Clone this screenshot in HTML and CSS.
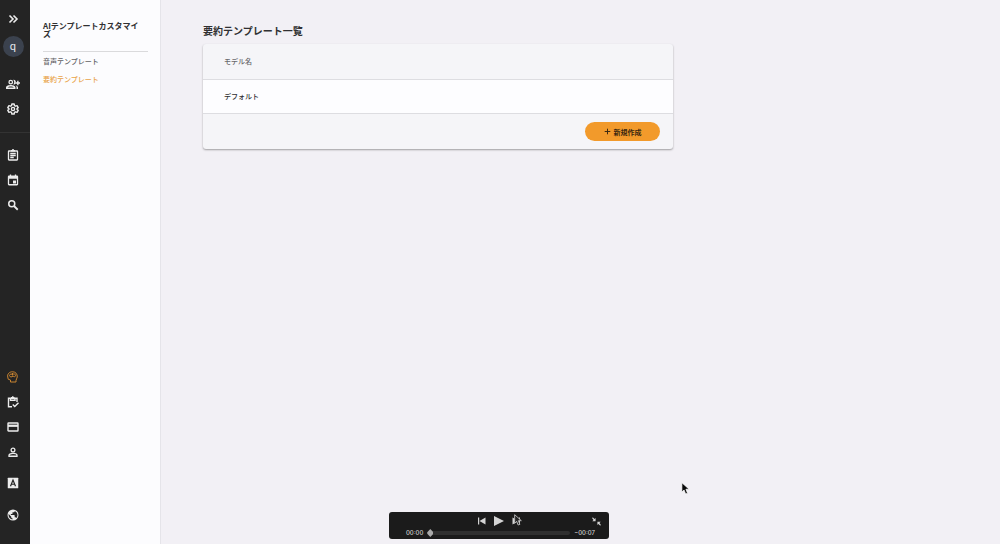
FILE: index.html
```html
<!DOCTYPE html>
<html lang="ja">
<head>
<meta charset="utf-8">
<meta name="viewport" content="width=device-width, initial-scale=1">
<title>要約テンプレート一覧</title>
<link rel="stylesheet" href="styles.css">
</head>
<body>
<div class="app">
  <nav class="rail" aria-label="メイン">
    <div class="rail-group">
      <button class="rail-btn" type="button" aria-label="開く"><svg class="icon" viewBox="0 0 24 24" fill="none" stroke="currentColor" stroke-width="3.200"><path d="M5 5l7 7-7 7M13 5l7 7-7 7"/></svg></button>
      <button class="avatar" type="button">q</button>
      <button class="rail-btn" type="button" aria-label="メンバー追加"><svg class="icon icon-wide" viewBox="0 0 28 24" fill="currentColor"><path fill-rule="evenodd" d="M9.500 3.500a4.800 4.800 0 1 0 0 9.600 4.800 4.800 0 0 0 0-9.600zm0 2.600a2.200 2.200 0 1 1 0 4.400 2.200 2.200 0 0 1 0-4.400zM9.500 14C6 14 0 15.500 0 19v3h19v-3c0-3.500-6-5-9.500-5zm-6.500 5.200c1-1.400 4-2.400 6.500-2.400s5.500 1 6.500 2.400z"/><path d="M14.500 3.500c7-1 7 10.600 0 9.600 2.500-3 2.500-6.600 0-9.600zM19 14.500c3 1 5 2.500 5 4.500v3h-3v-3c0-2-.7-3.300-2-4.500zM22.300 5.500v3h-3v2.800h3v3h2.800v-3h3V8.500h-3v-3z"/></svg></button>
      <button class="rail-btn" type="button" aria-label="設定"><svg class="icon" viewBox="0 0 24 24" fill="none" stroke="currentColor" stroke-width="2.800" stroke-linejoin="round"><path d="M9.700 2h4.600l.6 3.200 2.100 1.200 3.100-1.100 2.300 4-2.500 2.100v1.200l2.500 2.100-2.300 4-3.100-1.100-2.100 1.200-.6 3.200H9.700l-.6-3.200L7 17.600l-3.100 1.100-2.300-4 2.500-2.100v-1.200L1.600 9.300l2.300-4L7 6.400l2.100-1.200z"/><circle cx="12" cy="12" r="3.200"/></svg></button>
    </div>
    <hr class="rail-line">
    <div class="rail-group">
      <button class="rail-btn" type="button" aria-label="議事録"><svg class="icon" viewBox="0 0 24 24" fill="none" stroke="currentColor" stroke-width="2.600"><rect x="3" y="4" width="18" height="18" rx="1"/><path d="M6.500 9h11M6.500 13h11M6.500 17h7"/><path d="M8 3.500h8M10 2h4" stroke-width="3"/></svg></button>
      <button class="rail-btn" type="button" aria-label="予定"><svg class="icon" viewBox="0 0 24 24" fill="none" stroke="currentColor" stroke-width="2.600"><rect x="3" y="4.500" width="18" height="17" rx="1"/><path d="M3 7h18" stroke-width="5"/><path d="M7 1v4M17 1v4"/><path fill="currentColor" stroke="none" d="M12 13h6v6h-6z"/></svg></button>
      <button class="rail-btn" type="button" aria-label="検索"><svg class="icon" viewBox="0 0 24 24" fill="none" stroke="currentColor" stroke-width="3"><circle cx="9.500" cy="9.500" r="6"/><path d="M14 14l7.500 7.500" stroke-width="3.600"/></svg></button>
    </div>
    <div class="rail-group rail-bottom">
      <button class="rail-btn is-active" type="button" aria-label="AIテンプレート"><svg class="icon" viewBox="0 0 24 24" fill="none" stroke="currentColor" stroke-width="2" stroke-linejoin="round"><path d="M7 22v-4L2.500 16.500 1.500 12C0 6 5 1.500 11 1.500S21 6 20.500 12c-.3 3-2.500 4.500-2.500 7v3z"/><path d="M5 9c1-4 5-4 6-1 2-4 6-2 6 1s-3 3-5 1c-2 3-7 2-7-1zM11 4v5"/></svg></button>
      <button class="rail-btn" type="button" aria-label="タスク"><svg class="icon" viewBox="0 0 24 24" fill="none" stroke="currentColor" stroke-width="2.800"><path d="M10 21.500H3v-17h17V12M7 4.500v4h9v-4"/><path d="M8 3.500h7M10 2h3" stroke-width="3"/><path d="M11.500 17l4 4L23 13.500"/></svg></button>
      <button class="rail-btn" type="button" aria-label="支払い"><svg class="icon" viewBox="0 0 24 24" fill="none" stroke="currentColor" stroke-width="2.800"><rect x="2" y="4" width="20" height="16" rx="1"/><path d="M2 9.500h20" stroke-width="4.500"/></svg></button>
      <button class="rail-btn" type="button" aria-label="アカウント"><svg class="icon" viewBox="0 0 24 24" fill="none" stroke="currentColor" stroke-width="2.600"><circle cx="12" cy="8" r="3.800"/><path d="M4 20.500v-2c0-2.500 4.500-3.800 8-3.800s8 1.300 8 3.800v2z"/></svg></button>
      <button class="rail-btn rail-btn-spaced" type="button" aria-label="文字"><svg class="icon" viewBox="0 0 24 24"><rect x="1.500" y="1.500" width="21" height="21" rx="1" fill="currentColor"/><path d="M7 18.500L12 6l5 12.500M8.800 14.500h6.400" fill="none" stroke="#242424" stroke-width="2.400"/></svg></button>
      <button class="rail-btn" type="button" aria-label="言語"><svg class="icon" viewBox="0 0 24 24"><path fill="currentColor" fill-rule="evenodd" d="M12 1a11 11 0 1 0 0 22 11 11 0 0 0 0-22zm-1 19.900C6.500 20.400 3.100 16.600 3.100 12c0-.7.1-1.300.2-2L8.500 15.300v1.100c0 1.200 1 2.200 2.500 2.200zm7.600-2.800c-.3-.9-1.100-1.500-2.100-1.500h-1.100v-3.300c0-.6-.5-1.100-1.100-1.100H7.700V10h2.200c.6 0 1.100-.5 1.100-1.100V6.700h2.200c1.200 0 2.200-1 2.200-2.200V4c3.200 1.300 5.500 4.400 5.500 8 0 2.300-.9 4.500-2.300 6.100z"/></svg></button>
    </div>
  </nav>

  <aside class="side">
    <h2 class="side-title">AIテンプレートカスタマイズ</h2>
    <ul class="side-list">
      <li><a class="side-link" href="#voice">音声テンプレート</a></li>
      <li><a class="side-link is-active" href="#summary" aria-current="page">要約テンプレート</a></li>
    </ul>
  </aside>

  <main class="main">
    <h1 class="page-title">要約テンプレート一覧</h1>
    <section class="card">
      <table class="models">
        <thead><tr><th scope="col">モデル名</th></tr></thead>
        <tbody><tr><td>デフォルト</td></tr></tbody>
      </table>
      <div class="card-foot">
        <button class="create" type="button"><svg class="plus" viewBox="0 0 10 10" fill="none" stroke="currentColor" stroke-width="1.400"><path d="M5 1v8M1 5h8"/></svg>新規作成</button>
      </div>
    </section>
  </main>
</div>

<div class="player">
  <div class="player-top">
    <div class="player-controls">
      <button class="player-btn" type="button" aria-label="前へ"><svg class="skip" viewBox="0 0 8 8" fill="currentColor"><path d="M0 .5h1.200v7H0zM7.500.5v7L1.500 4z"/></svg></button>
      <button class="player-btn" type="button" aria-label="再生"><svg class="play" viewBox="0 0 10 10" fill="currentColor"><path d="M0 0l10 5-10 5z"/></svg></button>
      <button class="player-btn" type="button" aria-label="次へ"><svg class="skip" viewBox="0 0 8 8" fill="currentColor"><path d="M6.800.5H8v7H6.800zM.5.5v7l6-3.500z"/></svg></button>
    </div>
    <button class="player-btn player-exit" type="button" aria-label="全画面を終了"><svg class="shrink" viewBox="0 0 10 10" fill="currentColor"><path d="M.8.200l2 2L4 1v3.700H.3L1.700 3.300l-1.500-2zM9.200 9.800l-2-2L6 9V5.300h3.700L8.300 6.700l1.500 2z"/></svg></button>
  </div>
  <div class="player-time">
    <span>00:00</span>
    <input class="seek" type="range" min="0" max="7" value="0" aria-label="再生位置">
    <span>−00:07</span>
  </div>
  <svg class="pointer pointer-ghost" viewBox="0 0 12 18"><path d="M1 1v13l3-3 2.200 5.500 2.600-1L6.600 10H11z" fill="#242424" stroke="#bbb" stroke-width="1.400"/></svg>
</div>
<svg class="pointer pointer-main" viewBox="0 0 12 18"><path d="M1 1v13l3-3 2.200 5.500 2.600-1L6.600 10H11z" fill="#080808" stroke="#fff" stroke-width="1"/></svg>
</body>
</html>
```

FILE: styles.css
```css
* { box-sizing: border-box; }

body {
  margin: 0;
  background: #f2f0f5;
  color: #303032;
  font-family: "Noto Sans CJK JP", sans-serif;
  font-size: 7px;
  line-height: 10px;
}

button { padding: 0; border: 0; background: none; color: inherit; font: inherit; }

.app { display: flex; min-height: 100vh; }

.rail {
  display: flex;
  flex-direction: column;
  flex: 0 0 30px;
  padding: 7px 0 16px;
  background: #242424;
  color: #ececec;
}
.rail-group { display: flex; flex-direction: column; align-items: center; padding-right: 4px; }
.rail-bottom { margin-top: auto; }
.rail-btn { display: grid; place-items: center; width: 26px; height: 25px; padding-bottom: 1px; }
.rail-btn.is-active { color: #c98431; }
.rail-btn-spaced { margin: 6px 0 7px; }
.icon { display: block; width: 12px; height: 12px; }
.icon-wide { width: 14px; }
.rail-line { width: 100%; margin: 10px 0; border: 0; border-top: 1px solid #333; }
.avatar {
  width: 21px;
  height: 21px;
  margin: 4px 0 15px;
  border-radius: 50%;
  background: #3b424e;
  color: #e4e7ec;
  font-family: Roboto, sans-serif;
  font-size: 11px;
  line-height: 20px;
}

.side {
  flex: 0 0 131px;
  padding: 22px 12px 22px 13px;
  border-right: 1px solid #e5e4e9;
  background: #fcfcfe;
}
.side-title {
  margin: 0 0 13px;
  padding-right: 4px;
  font-size: 8px;
  font-weight: 700;
  line-height: 8px;
}
.side-list {
  display: grid;
  gap: 8px;
  margin: 0;
  padding: 4px 0 0;
  border-top: 1px solid #dadadc;
  list-style: none;
}
.side-link { display: block; color: #616164; font-weight: 500; text-decoration: none; }
.side-link.is-active { color: #e9a348; }

.main { flex: 1; min-width: 0; padding: 24px 42px; }
.page-title { margin: 0 0 6px; font-size: 10px; font-weight: 700; line-height: 14px; }
.card {
  max-width: 470px;
  overflow: hidden;
  border-radius: 3px;
  background: #f5f5f8;
  box-shadow: 0 1px 2px #00000059;
}
.models { width: 100%; border-collapse: collapse; text-align: left; }
.models th, .models td { padding: 12px 21px; border-bottom: 1px solid #dddde1; }
.models th { color: #69696c; font-weight: 500; line-height: 11px; }
.models td { padding-top: 11px; background: #fdfdff; font-weight: 500; }
.card-foot { display: flex; justify-content: flex-end; padding: 8px 13px; }
.create {
  display: flex;
  align-items: center;
  justify-content: center;
  gap: 3px;
  width: 75px;
  height: 19px;
  border-radius: 10px;
  background: #f29a2b;
  color: #3b2811;
  font-weight: 700;
}
.plus { width: 7px; height: 7px; }

.player {
  position: fixed;
  bottom: 5px;
  left: 50%;
  width: 220px;
  margin-left: -111px;
  padding: 3px 0 1px;
  border-radius: 3px;
  background: #1b1b1b;
  color: #d4d4d4;
  font-family: Inter, sans-serif;
  font-size: 6px;
  font-weight: 500;
}
.player-top {
  display: grid;
  grid-template-columns: 1fr auto 1fr;
  align-items: center;
  height: 12px;
  padding: 0 8px 0 7px;
}
.player-controls { display: flex; grid-column: 2; align-items: center; gap: 8px; }
.player-btn { display: block; }
.player-exit { justify-self: end; }
.skip { display: block; width: 8px; height: 8px; }
.play { display: block; width: 10px; height: 10px; }
.shrink { display: block; width: 9px; height: 9px; }
.player-time {
  display: flex;
  align-items: center;
  gap: 4px;
  height: 10px;
  margin-top: 1px;
  padding: 0 14px 0 17px;
}
.seek { flex: 1; min-width: 0; height: 8px; margin: 0; appearance: none; background: none; }
.seek::-webkit-slider-runnable-track { height: 4px; border-radius: 2px; background: #303030; }
.seek::-webkit-slider-thumb {
  appearance: none;
  width: 6px;
  height: 8px;
  margin-top: -2px;
  background: #aaa;
  clip-path: polygon(50% 0, 100% 40%, 100% 60%, 50% 100%, 0 60%, 0 40%);
}

.pointer { position: absolute; width: 8px; height: 12px; }
.pointer-ghost { top: 2px; left: 125px; }
.pointer-main { top: 482px; left: 681px; width: 9px; height: 13px; }
```
